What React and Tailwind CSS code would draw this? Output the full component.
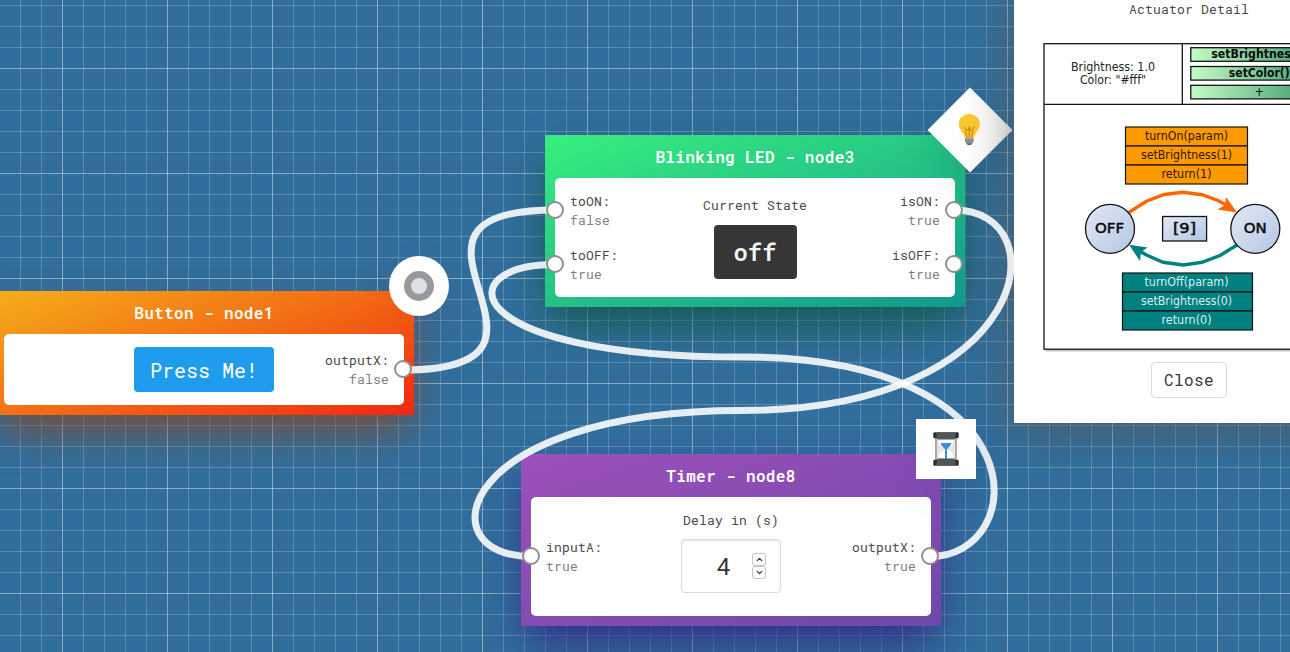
import React from "react";
import { ChevronDown, ChevronUp } from "lucide-react";

const MONO = "font-['Roboto_Mono','DejaVu_Sans_Mono','Liberation_Mono',monospace]";

const GRID =
  "bg-[linear-gradient(90deg,rgba(255,255,255,0.28)_1px,transparent_1px),linear-gradient(rgba(255,255,255,0.28)_1px,transparent_1px),linear-gradient(90deg,rgba(255,255,255,0.2)_1px,transparent_1px),linear-gradient(rgba(255,255,255,0.2)_1px,transparent_1px)] bg-[size:105px_105px,105px_105px,21px_21px,21px_21px] bg-[position:62px_0,0_68px,20px_0,0_5px]";

const WIRES = [
  "M403 370C603 370 355 210 555 210",
  "M555 264.500C449 264.500 455 357 742 357C1044 357 1030 556.500 930 556.500",
  "M954 210C1060 210 1034 410.500 742 410.500C454 410.500 426 556.500 531 556.500",
];

function Port({ label, value, side = "left" }) {
  const right = side === "right";
  return (
    <div
      className={`relative flex flex-col text-[13px] leading-[19px] tracking-[0.2px] text-[#4a4a4a] ${
        right ? "items-end pr-[15px]" : "items-start pl-[15px]"
      }`}
    >
      <span>{label}</span>
      <span className="text-[#7f7f7f]">{value}</span>
      <i
        className={`absolute top-[9px] z-20 size-[18px] rounded-full border-2 border-[#8f8f8f] bg-white ${
          right ? "-right-2" : "-left-[9px]"
        }`}
      />
    </div>
  );
}

function Node({ title, frame, badge, badgeStyle, inputs, outputs, children, body }) {
  return (
    <section className={`absolute w-[420px] px-[10px] pb-[10px] ${frame}`}>
      <h2 className="flex h-[43px] items-center justify-center text-base font-semibold tracking-[0.36px] text-white">
        {title}
      </h2>
      <div className={`grid grid-cols-[120px_160px_120px] rounded-[5px] bg-white ${body}`}>
        <div className="flex flex-col justify-center gap-4">{inputs}</div>
        <div className="flex flex-col items-center">{children}</div>
        <div className="flex flex-col justify-center gap-4">{outputs}</div>
      </div>
      <div
        className={`absolute -top-[35px] -right-[35px] flex size-[60px] items-center justify-center bg-white ${badgeStyle}`}
      >
        {badge}
      </div>
    </section>
  );
}

function Bulb() {
  return (
    <svg viewBox="0 0 22 32" className="relative -left-px h-8 w-[22px] -rotate-45">
      <path
        d="M11 .8C5 .8.4 5.200.4 10.700c0 4.300 2.400 6.500 4.100 9.300 1 1.700 1.700 3.300 2.100 5h8.800c.4-1.700 1.100-3.300 2.100-5 1.700-2.800 4.100-5 4.100-9.300C21.600 5.200 17 .8 11 .8Z"
        fill="#fdcb2e"
      />
      <path
        d="M8.800 24.500 7.400 17.500M13.200 24.500l1.400-7M6.500 13.500c.3 4 3.700 5 4.500 0 .8 5 4.200 4 4.500 0M11 13v11.500"
        fill="none"
        stroke="#c98f1c"
        strokeWidth="1.300"
      />
      <path d="M6.600 25h8.800v3l-1.500 2.600-1.700 1.200H9.800l-1.700-1.200L6.600 28Z" fill="#8a9299" />
      <path d="M8.500 30.200h5l-1.300 1.600H9.800Z" fill="#6d5a4c" />
    </svg>
  );
}

function Hourglass() {
  return (
    <svg viewBox="0 0 26 34" className="h-[34px] w-[26px]">
      <path d="M2 5h2.200v24H2zM21.800 5h2.200v24h-2.200z" fill="#b9a69a" />
      <path d="M4.200 6h17.600v22H4.200z" fill="#e3e7eb" />
      <path
        d="M5 7h16v3c0 3-3.500 5.500-6 7 2.500 1.500 6 4 6 7v3H5v-3c0-3 3.500-5.500 6-7-2.500-1.500-6-4-6-7Z"
        fill="#fff"
        stroke="#d5d9dd"
        strokeWidth=".8"
      />
      <path d="M7.500 11h11c-.6 3-3.200 4.500-4.500 6.200V27h-2V17.200C10.700 15.500 8.100 14 7.500 11Z" fill="#3c8fd0" />
      <rect x=".3" y=".3" width="25.400" height="6" rx="1.200" fill="#2b3034" />
      <rect x=".3" y="27.700" width="25.400" height="6" rx="1.200" fill="#2b3034" />
      <path d="M3 1h20l-1.500 6.500h-17ZM4.500 26.500h17L23 33H3Z" fill="#50575b" />
    </svg>
  );
}

function Stack({ x, width, y, fill, ink, rows }) {
  return (
    <g>
      {rows.map(([text, length], i) => (
        <g key={text}>
          <rect x={x} y={y + i * 19} width={width} height="19" fill={fill} stroke="#141414" strokeWidth="1.200" />
          <text
            x="1186.500"
            y={y + i * 19 + 13}
            textLength={length}
            lengthAdjust="spacingAndGlyphs"
            fill={ink}
            textAnchor="middle"
          >
            {text}
          </text>
        </g>
      ))}
    </g>
  );
}

function Diagram() {
  const calls = [
    ["setBrightness()", 96],
    ["setColor()", 61],
    ["+", 9],
  ];
  return (
    <svg
      viewBox="1043 43 292 310"
      className="h-[310px] w-[292px] font-['DejaVu_Sans',sans-serif] text-[11.5px]"
    >
      <defs>
        <linearGradient id="call">
          <stop offset="0" stopColor="#c4fbc6" />
          <stop offset="1" stopColor="#2f9163" />
        </linearGradient>
        <linearGradient id="state" x2="1" y2="1">
          <stop offset="0" stopColor="#e2e9f5" />
          <stop offset="1" stopColor="#b4c6e4" />
        </linearGradient>
      </defs>
      <rect x="1045.500" y="45.500" width="289" height="306" fill="#c4c4c4" />
      <rect x="1044" y="43.700" width="289" height="305.500" fill="#fff" stroke="#141414" strokeWidth="1.300" />
      <path d="M1044 104.300h289M1182.300 43.700v60.600" stroke="#141414" strokeWidth="1.300" />
      <g fill="#222" textAnchor="middle">
        <text x="1113" y="71" textLength="84" lengthAdjust="spacingAndGlyphs">Brightness: 1.0</text>
        <text x="1113" y="84" textLength="66" lengthAdjust="spacingAndGlyphs">Color: "#fff"</text>
      </g>
      {calls.map(([text, length], i) => (
        <g key={text}>
          <rect x="1190.800" y={47.700 + i * 18.800} width="137" height="13.600" fill="url(#call)" stroke="#141414" strokeWidth="1.300" />
          <text
            x="1259.300"
            y={58.300 + i * 18.900}
            textLength={length}
            lengthAdjust="spacingAndGlyphs"
            textAnchor="middle"
            fill="#0b0b0b"
            fontWeight={i < 2 ? 700 : 400}
          >
            {text}
          </text>
        </g>
      ))}
      <Stack
        x={1125.500}
        width={122}
        y={127}
        fill="#ff9900"
        ink="#2a1a00"
        rows={[["turnOn(param)", 83], ["setBrightness(1)", 91], ["return(1)", 50]]}
      />
      <Stack
        x={1122.500}
        width={130}
        y={273}
        fill="#008080"
        ink="#d8eeee"
        rows={[["turnOff(param)", 84], ["setBrightness(0)", 91], ["return(0)", 50]]}
      />
      <path d="M1128 213 1146 201.500 1164 194.500 1183 192.200 1202 194.700 1218 200.500 1228 206" fill="none" stroke="#ff6600" strokeWidth="3.400" />
      <path d="M1237 212.500 1226 197 1225 205 1217.500 209.500Z" fill="#ff6600" />
      <path d="M1237 245 1220 255.500 1202 262.300 1183.500 265 1163 262.300 1146 254.800 1138 250" fill="none" stroke="#008080" strokeWidth="3.400" />
      <path d="M1129 244.800 1147.500 247.500 1141 252 1140 261Z" fill="#008080" />
      <circle cx="1110" cy="228.800" r="24.500" fill="url(#state)" stroke="#141414" strokeWidth="1.300" />
      <circle cx="1255.300" cy="228.800" r="24.500" fill="url(#state)" stroke="#141414" strokeWidth="1.300" />
      <rect x="1162.600" y="216.500" width="44" height="24.500" fill="url(#state)" stroke="#141414" strokeWidth="1.300" />
      <g className="text-[14px]" fill="#0b0b0b" stroke="#0b0b0b" strokeWidth="0.5" textAnchor="middle">
        <text x="1109.500" y="233.400" textLength="29" lengthAdjust="spacingAndGlyphs">OFF</text>
        <text x="1255.300" y="233.400" textLength="23" lengthAdjust="spacingAndGlyphs">ON</text>
        <text x="1184.500" y="233.400" textLength="23" lengthAdjust="spacingAndGlyphs">[9]</text>
      </g>
    </svg>
  );
}

export default function App() {
  return (
    <main className={`relative h-[652px] w-[1290px] overflow-hidden bg-[#316e9c] ${GRID} ${MONO}`}>
      <Node
        title="Button - node1"
        frame="-left-[6px] top-[291px] bg-linear-[160deg] from-[#f5af19] to-[#f12711] shadow-[0_20px_40px_-6px_rgba(150,65,25,0.75)]"
        body="h-[71px]"
        badgeStyle="z-20 rounded-full shadow-[0_10px_35px_rgba(170,65,20,0.08)]"
        badge={<div className="size-[30px] rounded-full border-[7px] border-[#97999b] bg-[#d9e2e9]" />}
        outputs={<Port side="right" label="outputX:" value="false" />}
      >
        <button className="mt-[13px] h-[45px] w-[140px] rounded-[4px] bg-[#209cee] text-xl text-white">Press Me!</button>
      </Node>

      <Node
        title="Blinking LED - node3"
        frame="left-[545px] top-[135px] bg-linear-[160deg] from-[#38ef7d] to-[#11998e] shadow-[0_20px_40px_-6px_rgba(15,85,60,0.85)]"
        body="h-[119px]"
        badgeStyle="rotate-45 shadow-[10px_10px_35px_rgba(10,80,60,0.16)]"
        badge={<Bulb />}
        inputs={
          <>
            <Port label="toON:" value="false" />
            <Port label="toOFF:" value="true" />
          </>
        }
        outputs={
          <>
            <Port side="right" label="isON:" value="true" />
            <Port side="right" label="isOFF:" value="true" />
          </>
        }
      >
        <span className="mt-[18px] mb-[10px] text-[13px] leading-[19px] tracking-[0.2px] text-[#4a4a4a]">Current State</span>
        <span className="flex h-[54px] w-[83px] items-center justify-center rounded-[4px] bg-[#363636] pb-px text-2xl font-semibold text-[#f5f5f5]">
          off
        </span>
      </Node>

      <Node
        title="Timer - node8"
        frame="left-[521px] top-[454px] bg-linear-[160deg] from-[#9d50bb] to-[#6e48aa] shadow-[0_20px_40px_-6px_rgba(50,35,130,0.9)]"
        body="h-[119px]"
        badgeStyle="z-20 shadow-[0_10px_35px_rgba(50,35,130,0.1)]"
        badge={<Hourglass />}
        inputs={<Port label="inputA:" value="true" />}
        outputs={<Port side="right" label="outputX:" value="true" />}
      >
        <span className="mt-[14px] mb-[9px] text-[13px] leading-[19px] tracking-[0.2px] text-[#4a4a4a]">Delay in (s)</span>
        <div className="flex h-[54px] w-[100px] items-center justify-end gap-[21px] rounded-[4px] border border-[#dbdbdb] bg-white pr-[14px] text-2xl text-[#363636] shadow-[inset_0_1px_2px_rgba(10,10,10,0.1)]">
          <span>4</span>
          <span className="flex flex-col">
            <span className="flex h-[13px] w-[14px] items-center justify-center rounded-[3px] border border-[#c4c4c4]">
              <ChevronUp size={9} strokeWidth={3.500} />
            </span>
            <span className="flex h-[13px] w-[14px] items-center justify-center rounded-[3px] border border-[#c4c4c4] pb-px">
              <ChevronDown size={9} strokeWidth={3.500} />
            </span>
          </span>
        </div>
      </Node>

      <svg viewBox="0 0 1290 652" className="pointer-events-none absolute inset-0 z-10 h-[652px] w-[1290px]">
        {WIRES.map((d) => (
          <path key={d} d={d} fill="none" stroke="#fff" strokeOpacity="0.88" strokeWidth="7" />
        ))}
      </svg>

      <aside className="absolute left-[1014px] top-0 z-5 flex h-[423px] w-[350px] flex-col items-center bg-white shadow-[0_5px_45px_rgba(95,85,75,0.7)]">
        <h3 className="mb-[24px] text-[13px] leading-[19px] tracking-[0.2px] text-[#4a4a4a]">Actuator Detail</h3>
        <Diagram />
        <button className="mt-[9px] h-[36px] w-[76px] shrink-0 rounded-[4px] border border-[#dbdbdb] text-base tracking-[0.4px] text-[#363636]">
          Close
        </button>
      </aside>
    </main>
  );
}
